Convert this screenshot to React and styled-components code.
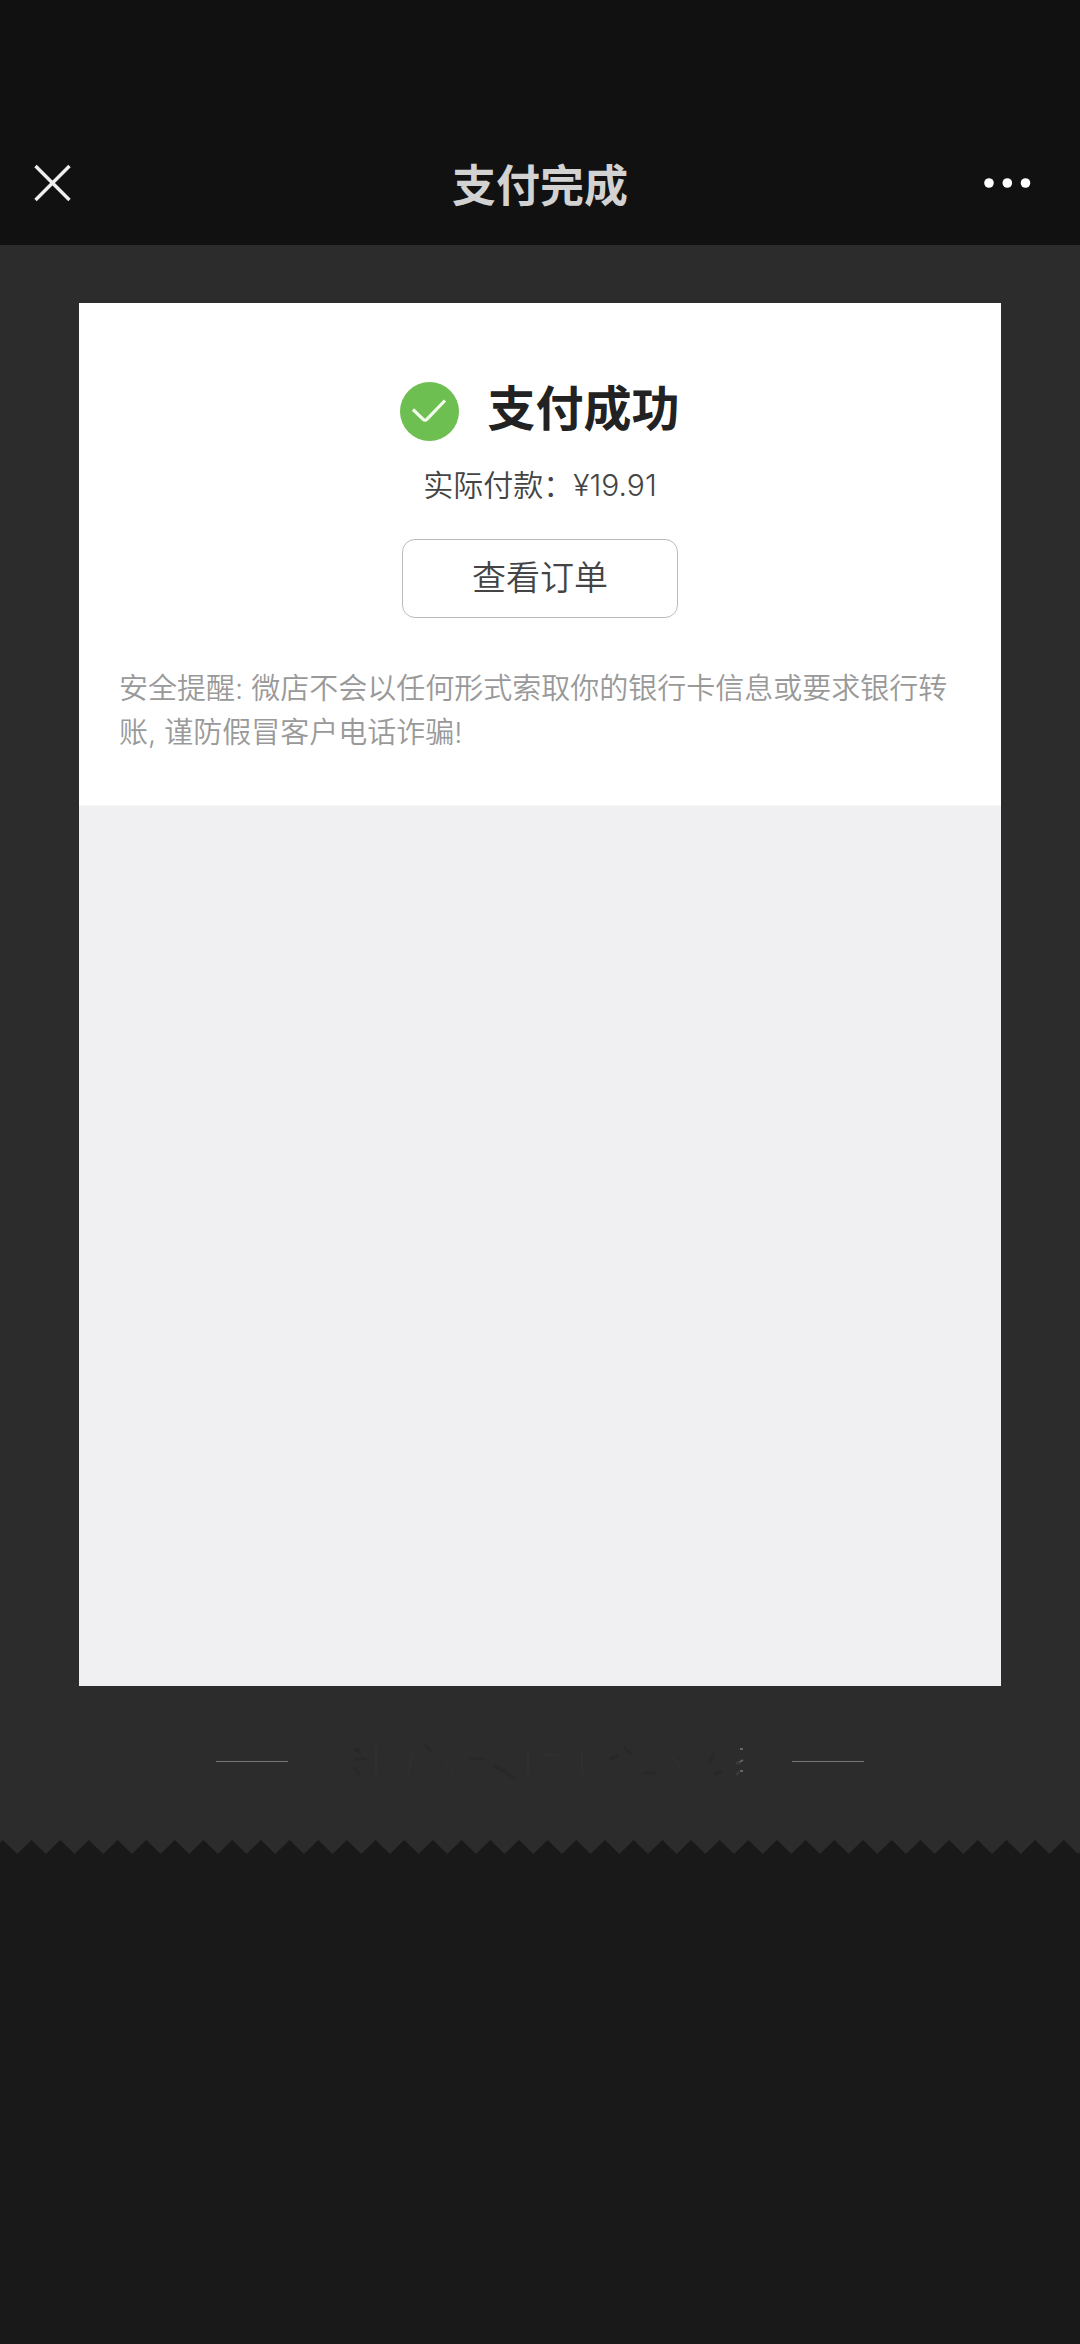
import React from 'react';
import styled, { createGlobalStyle } from 'styled-components';

const GlobalStyle = createGlobalStyle`
  *, *::before, *::after {
    box-sizing: border-box;
  }

  body {
    margin: 0;
    background-color: #191919;
    color: #444;
    font-family: Inter, 'Noto Sans CJK SC', sans-serif;
    font-weight: 350;
  }
`;

const StyledHeader = styled.header`
  display: grid;
  grid-template-columns: 1fr auto 1fr;
  align-items: center;
  height: 245px;
  padding: 120px 32px 0;
  background-color: #111;

  h1 {
    margin: 0;
    padding-top: 6px;
    color: #d2d2d2;
    font-size: 44px;
    font-weight: 600;
    line-height: 64px;
  }
`;

const IconButton = styled.button`
  display: flex;
  justify-self: ${({ $end }) => ($end ? 'end' : 'start')};
  padding: 0;
  border: 0;
  background: none;
  color: ${({ $end }) => ($end ? '#fff' : '#eee')};
  cursor: pointer;
`;

const StyledMain = styled.main`
  padding: 58px 79px 0;
  background-color: #2c2c2c;
`;

const Card = styled.section`
  width: 100%;
  aspect-ratio: 2 / 3;
  background-color: #f0f0f3;
`;

const Result = styled.div`
  display: flex;
  flex-direction: column;
  align-items: center;
  padding: 72px 40px 50px;
  border-bottom: 1px solid #f7f7f8;
  background-color: #fff;
`;

const ResultTitle = styled.div`
  display: flex;
  align-items: center;
  gap: 28px;

  h2 {
    margin: 0;
    padding-bottom: 4px;
    color: #222;
    font-size: 48px;
    font-weight: 700;
    line-height: 68px;
  }
`;

const Amount = styled.p`
  margin: 16px 0 32px;
  font-size: 30px;
  line-height: 44px;
`;

const OrderButton = styled.button`
  width: 276px;
  height: 79px;
  padding: 0 0 2px;
  border: 1px solid #bbb;
  border-radius: 13px;
  background-color: #fff;
  color: #444;
  font-family: inherit;
  font-size: 34px;
  font-weight: inherit;
  line-height: 48px;
  cursor: pointer;
`;

const Notice = styled.p`
  width: 100%;
  margin: 49px 0 0;
  color: #999;
  font-size: 29px;
  line-height: 44px;
`;

const StyledFooter = styled.footer`
  display: flex;
  align-items: center;
  justify-content: center;
  gap: 32px;
  height: 154px;
  padding-bottom: 4px;
`;

const Rule = styled.span`
  width: 72px;
  height: 1px;
  background-color: #777;
`;

const TornEdge = styled.svg`
  display: block;
  width: 100%;
  height: 14px;
`;

const TOOTH = 30;
const EDGE_WIDTH = 1130;

const getEdgePoints = () => {
  const points = ['-12,0'];
  for (let x = -12; x <= EDGE_WIDTH + TOOTH; x += TOOTH) {
    points.push(`${x},14`, `${x + TOOTH / 2},0`);
  }
  return points.join(' ');
};

const CloseIcon = () => (
  <svg width="40" height="40" viewBox="0 0 40 40" fill="none" aria-hidden="true">
    <path d="M3.5 3l34 34M37.5 3l-34 34" stroke="currentColor" strokeWidth="3.4" />
  </svg>
);

const MoreIcon = () => (
  <svg width="64" height="40" viewBox="0 0 64 40" fill="currentColor" aria-hidden="true">
    <circle cx="5" cy="20" r="4.8" />
    <circle cx="23.3" cy="20" r="4.8" />
    <circle cx="41.5" cy="20" r="4.8" />
  </svg>
);

const SuccessIcon = () => (
  <svg width="59" height="59" viewBox="0 0 59 59" fill="none" aria-hidden="true">
    <circle cx="29.5" cy="29.5" r="29.5" fill="#6cbf50" />
    <path
      d="M13 27.5l10.2 9.8q1.8 1.7 3.6 0L45 18.5"
      stroke="#f3ffec"
      strokeWidth="3.2"
    />
  </svg>
);

// Worn-off print between the two rules
const FadedMark = () => (
  <svg width="440" height="48" viewBox="0 0 440 48" fill="none" aria-hidden="true">
    <g stroke="#282828" strokeWidth="3">
      <path d="M34 12l7 3M33 22h14M34 30l5 8M105 8l8 8M150 22h14M174 28l22 14" />
      <path d="M304 10l7 7M290 22l8-3M324 36h12M394 16l-5 10M394 38l8-4" />
    </g>
    <g stroke="#2f2f2f" strokeWidth="2">
      <path d="M56 10v28M94 14l-6 22M122 20l12 16M208 12v26M222 18h16M262 14v22M350 18l14 16" />
    </g>
    <g stroke="#666" strokeWidth="2">
      <path d="M420 12h3M418 26l5-3M420 34h3" />
    </g>
    <path d="M416 26h4M416 38l3-3" stroke="#3a3a3a" strokeWidth="3" />
  </svg>
);

const App = () => (
  <>
    <GlobalStyle />

    <StyledHeader>
      <IconButton type="button" aria-label="关闭">
        <CloseIcon />
      </IconButton>
      <h1>支付完成</h1>
      <IconButton type="button" aria-label="更多" $end>
        <MoreIcon />
      </IconButton>
    </StyledHeader>

    <StyledMain>
      <Card>
        <Result>
          <ResultTitle>
            <SuccessIcon />
            <h2>支付成功</h2>
          </ResultTitle>
          <Amount>实际付款：¥19.91</Amount>
          <OrderButton type="button">查看订单</OrderButton>
          <Notice>
            安全提醒: 微店不会以任何形式索取你的银行卡信息或要求银行转账, 谨防假冒客户电话诈骗!
          </Notice>
        </Result>
      </Card>

      <StyledFooter>
        <Rule />
        <FadedMark />
        <Rule />
      </StyledFooter>
    </StyledMain>

    <TornEdge viewBox={`0 0 ${EDGE_WIDTH} 14`} preserveAspectRatio="none" aria-hidden="true">
      <polygon points={getEdgePoints()} fill="#2c2c2c" />
    </TornEdge>
  </>
);

export default App;
